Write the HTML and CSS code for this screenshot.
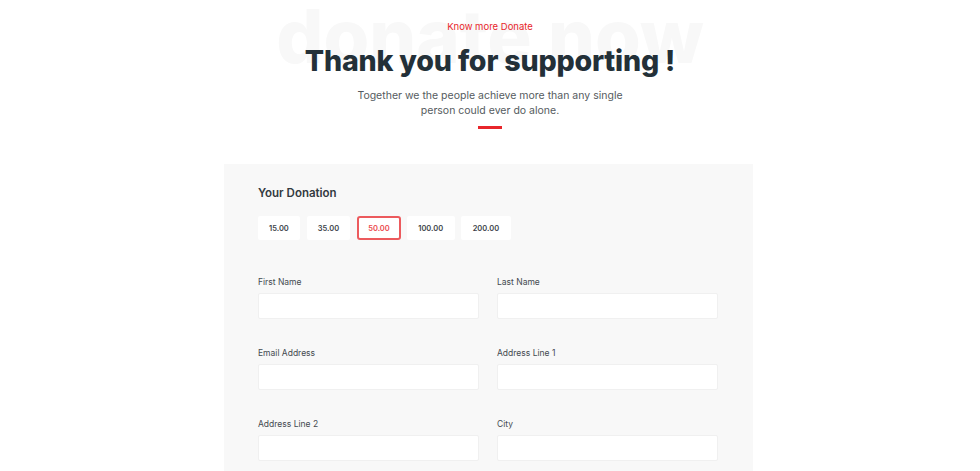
FILE: index.html
```html
<!DOCTYPE html>
<html>
<head>
<meta charset="utf-8">
<link rel="stylesheet" href="styles.css">
</head>
<body>
<section class="hero">
  <div class="bg-word" aria-hidden="true">donate now</div>
  <p class="kicker">Know more Donate</p>
  <h1 class="title">Thank you for supporting !</h1>
  <p class="lead">Together we the people achieve more than any single<br>person could ever do alone.</p>
  <span class="bar"></span>
</section>
<section class="panel">
  <h2 class="panel-title">Your Donation</h2>
  <div class="amounts">
    <button class="amt">15.00</button>
    <button class="amt">35.00</button>
    <button class="amt active">50.00</button>
    <button class="amt">100.00</button>
    <button class="amt">200.00</button>
  </div>
  <div class="fields">
    <label class="field"><span>First Name</span><input type="text"></label>
    <label class="field"><span>Last Name</span><input type="text"></label>
    <label class="field"><span>Email Address</span><input type="text"></label>
    <label class="field"><span>Address Line 1</span><input type="text"></label>
    <label class="field"><span>Address Line 2</span><input type="text"></label>
    <label class="field"><span>City</span><input type="text"></label>
  </div>
</section>
</body>
</html>
```

FILE: styles.css
```css
* { box-sizing: border-box; }
html, body { margin: 0; padding: 0; background: #fff; overflow: hidden; }
body { font-family: "Inter", "Liberation Sans", sans-serif; color: #2a323a; }

.hero {
  position: relative;
  display: flex;
  flex-direction: column;
  align-items: center;
  padding-top: 20px;
  height: 164px;
}
.bg-word {
  position: absolute;
  top: 0;
  left: 0; right: 0;
  text-align: center;
  font-family: "Inter", sans-serif;
  font-weight: 800;
  font-size: 74px;
  letter-spacing: 0;
  color: #f8f8f8;
  line-height: 72px;
  z-index: 0;
  white-space: nowrap;
}
.kicker {
  position: relative;
  margin: 0;
  font-size: 9.5px;
  color: #e8262b;
  line-height: 14px;
}
.title {
  position: relative;
  margin: 9px 0 0;
  font-weight: 800;
  font-size: 28.6px;
  letter-spacing: -0.2px;
  line-height: 36px;
  color: #233038;
}
.lead {
  position: relative;
  margin: 9px 0 0;
  font-size: 10.5px;
  line-height: 15px;
  color: #555b60;
  text-align: center;
}
.bar {
  display: block;
  margin-top: 8px;
  width: 24px;
  height: 3px;
  background: #e8262b;
}

.panel {
  width: 529px;
  margin: 0 0 0 224px;
  background: #f8f8f8;
  padding: 21px 35px 20px 34px;
  height: 320px;
}
.panel-title {
  margin: 0;
  font-weight: 600;
  font-size: 11.5px;
  line-height: 16px;
  color: #333a40;
}
.amounts {
  display: flex;
  gap: 7px;
  margin-top: 15px;
}
.amt {
  height: 24px;
  padding: 0 11px;
  border: 0;
  border-radius: 2px;
  background: #fff;
  font-family: "Inter", sans-serif;
  font-weight: 600;
  font-size: 7.5px;
  color: #3d444a;
}
.amt:nth-child(4) { padding: 0 11.5px; margin-left: -1px; }
.amt:nth-child(5) { padding: 0 12px; margin-left: -1px; }
.amt.active {
  border: 2px solid #ec5a5d;
  border-radius: 3px;
  color: #ec4a4d;
  padding: 0 9px;
}
.fields {
  display: grid;
  grid-template-columns: 221px 221px;
  column-gap: 18px;
  row-gap: 29px;
  margin-top: 37px;
}
.field { display: flex; flex-direction: column; }
.field span {
  font-size: 8.5px;
  line-height: 11px;
  color: #444a50;
  margin-bottom: 5px;
}
.field input {
  height: 26px;
  border: 1px solid #f0f0f0;
  background: #fff;
  border-radius: 2px;
  outline: none;
}
```
